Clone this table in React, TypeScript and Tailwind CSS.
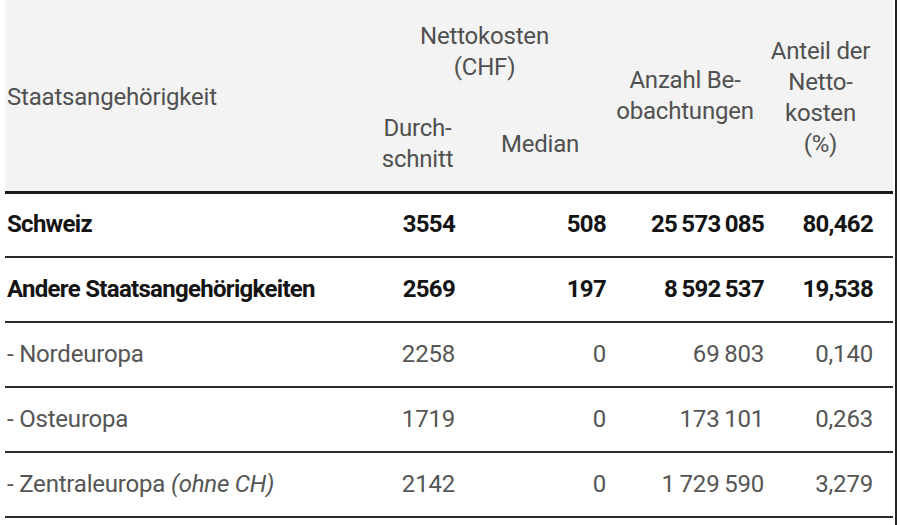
const rows = [
  { name: "Schweiz", avg: "3554", median: "508", count: "25\u2009573\u2009085", share: "80,462", bold: true },
  { name: "Andere Staatsangehörigkeiten", avg: "2569", median: "197", count: "8\u2009592\u2009537", share: "19,538", bold: true },
  { name: "- Nordeuropa", avg: "2258", median: "0", count: "69\u2009803", share: "0,140" },
  { name: "- Osteuropa", avg: "1719", median: "0", count: "173\u2009101", share: "0,263" },
  { name: "- Zentraleuropa", note: "(ohne CH)", avg: "2142", median: "0", count: "1\u2009729\u2009590", share: "3,279" },
];

export default function App() {
  return (
    <div className="w-[900px] h-[525px] bg-white overflow-hidden" style={{ fontFamily: "Roboto, 'Liberation Sans', sans-serif" }}>
      <div className="ml-[5px] w-[892px] h-full border-r-2 border-[#222]">
        <table className="w-[888px] table-fixed border-collapse text-[24px] leading-[31px] tracking-[-0.2px]">
          <colgroup>
            <col className="w-[365px]" />
            <col className="w-[95px]" />
            <col className="w-[150px]" />
            <col className="w-[155px]" />
            <col className="w-[123px]" />
          </colgroup>
          <thead className="bg-[#f3f3f3] text-[#505050]">
            <tr className="h-[96px]">
              <th rowSpan={2} className="pl-[2px] pt-[4px] text-left font-normal align-middle">
                Staatsangehörigkeit
              </th>
              <th colSpan={2} className="pr-[16px] pt-[8px] text-center font-normal align-middle whitespace-nowrap">
                Nettokosten
                <br />
                (CHF)
              </th>
              <th rowSpan={2} className="pr-[15px] pt-[2px] text-center font-normal align-middle whitespace-nowrap">
                Anzahl Be-
                <br />
                obachtungen
              </th>
              <th rowSpan={2} className="pr-[22px] pt-[6px] text-center font-normal align-middle whitespace-nowrap">
                Anteil der
                <br />
                Netto-
                <br />
                kosten
                <br />
                (%)
              </th>
            </tr>
            <tr className="h-[96px] border-b-[3px] border-[#1a1a1a]">
              <th className="pt-[2px] text-center font-normal align-middle">
                Durch-
                <br />
                schnitt
              </th>
              <th className="pt-[2px] text-center font-normal align-middle">Median</th>
            </tr>
          </thead>
          <tbody>
            {rows.map((r) => (
              <tr
                key={r.name}
                className={`h-[65px] border-b-2 border-[#2a2a2a] ${r.bold ? "font-bold text-[#141414] tracking-[-0.7px]" : "text-[#555]"}`}
              >
                <td className="pl-[2px] align-middle whitespace-nowrap">
                  {r.name}
                  {r.note && <span className="italic"> {r.note}</span>}
                </td>
                <td className="pr-[10px] text-right align-middle">{r.avg}</td>
                <td className="pr-[9px] text-right align-middle">{r.median}</td>
                <td className="pr-[6px] text-right align-middle whitespace-nowrap">{r.count}</td>
                <td className="pr-[20px] text-right align-middle">{r.share}</td>
              </tr>
            ))}
          </tbody>
        </table>
      </div>
    </div>
  );
}
